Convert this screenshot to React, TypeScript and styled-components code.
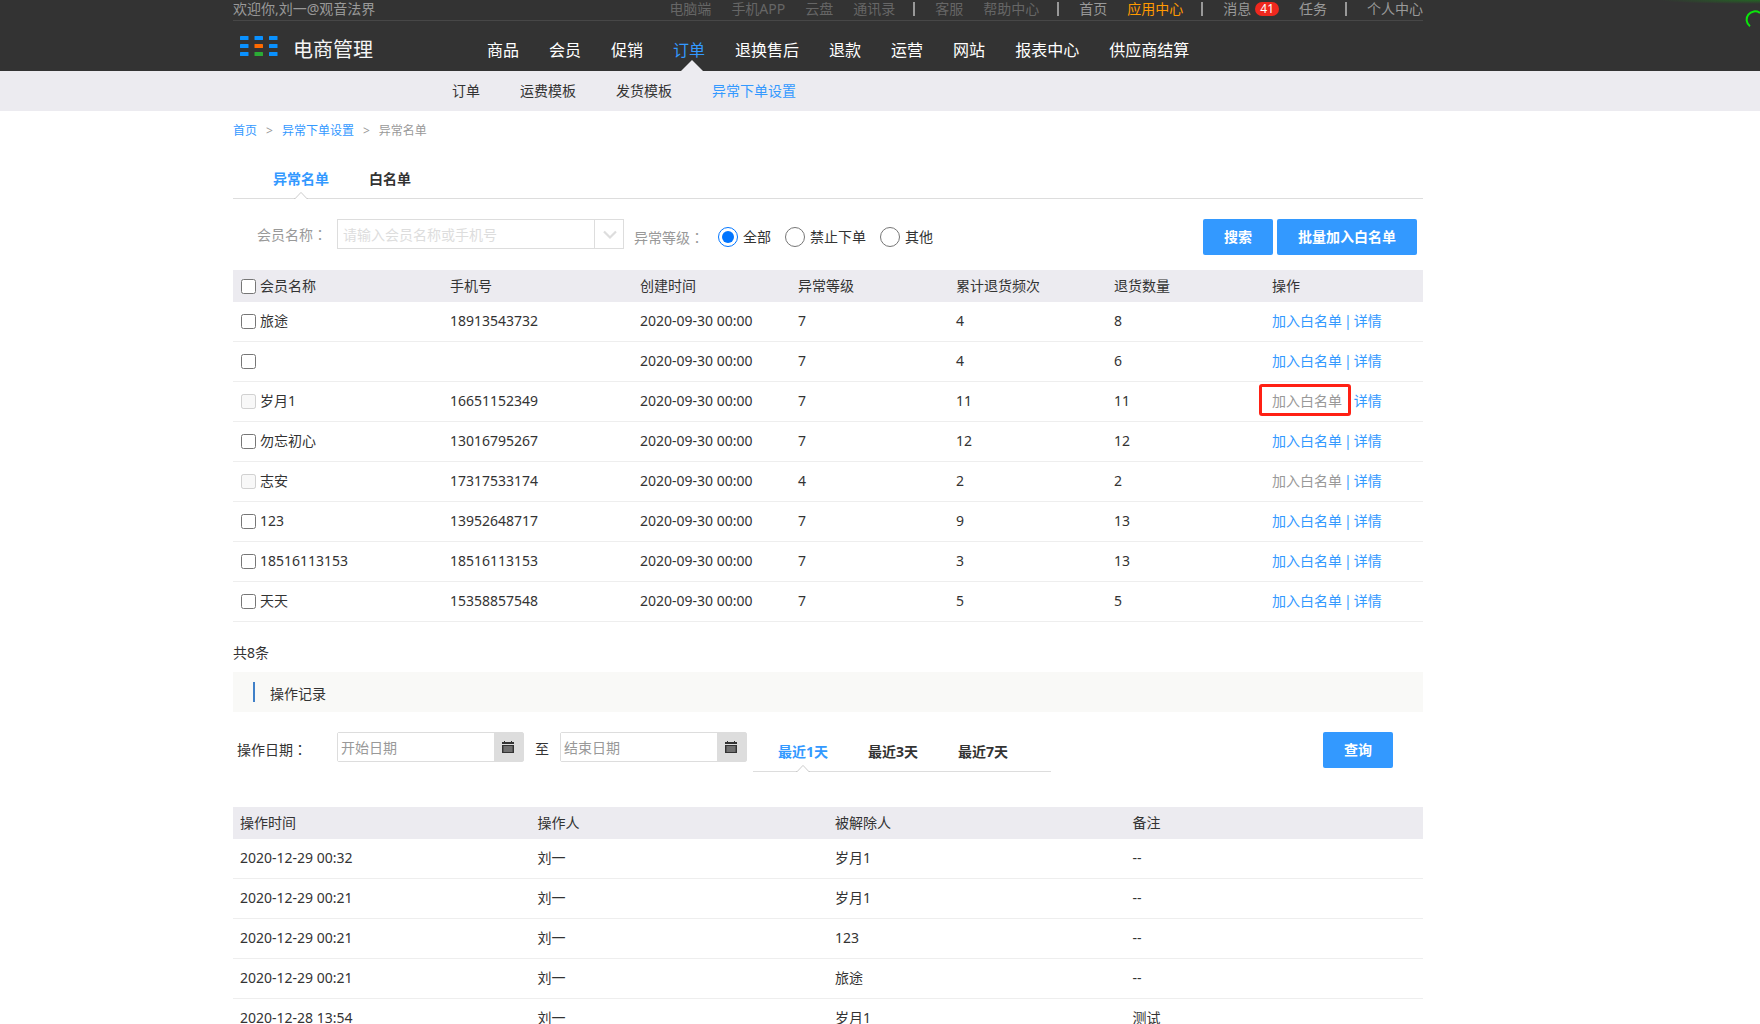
import React, { useState } from "react";
import styled, { createGlobalStyle, css } from "styled-components";

const GlobalStyle = createGlobalStyle`
  *, *::before, *::after { box-sizing: border-box; }
  body {
    margin: 0;
    background: #fff;
    color: #333;
    font: 14px/20px "Noto Sans", "Noto Sans CJK SC", sans-serif;
  }
  a { color: inherit; text-decoration: none; }
  button, input { font: inherit; }
`;

const Page = styled.div`
  min-height: 100vh;
  overflow-x: hidden;
`;

const Band = styled.div`
  padding-right: 104px;
`;
const Column = styled.div`
  max-width: 1190px;
  margin: 0 auto;
`;

/* ---------- header ---------- */
const Header = styled.header`
  position: relative;
  background: #333;
`;
const TopBar = styled.div`
  display: flex;
  justify-content: space-between;
  height: 21px;
  line-height: 18px;
  color: #999;
  border-bottom: 1px solid #474747;
  white-space: nowrap;
`;
const TopLinks = styled.nav`
  display: flex;
  gap: 20px;
`;
const TopLink = styled.a<{ $tone?: "dim" | "hot" }>`
  display: flex;
  align-items: center;
  gap: 4px;
  height: 18px;
  color: ${(p) => (p.$tone === "dim" ? "#666" : p.$tone === "hot" ? "#ff9900" : "#999")};
`;
const TopDivider = styled.span`
  width: 2px;
  height: 14px;
  margin: 2px 0 0 -2px;
  background: #999;
`;
const Badge = styled.span`
  padding: 0 5px;
  border-radius: 8px;
  background: #f0281e;
  color: #fff;
  font-size: 12px;
  line-height: 14px;
`;
const MainBar = styled.div`
  display: flex;
  height: 50px;
`;
const Brand = styled.a`
  display: flex;
  align-items: center;
  gap: 15px;
  width: 254px;
  padding: 8px 0 0 7px;
  color: #f5f5f5;
  font-size: 20px;
  white-space: nowrap;
  svg { margin-bottom: 8px; }
`;
const MainNav = styled.nav`
  display: flex;
  gap: 30px;
`;
const MainLink = styled.a<{ $active?: boolean }>`
  position: relative;
  height: 50px;
  font-size: 16px;
  line-height: 58px;
  white-space: nowrap;
  color: ${(p) => (p.$active ? "#3399ff" : "#fff")};
  ${(p) =>
    p.$active &&
    css`
      &::after {
        content: "";
        position: absolute;
        bottom: 0;
        left: 8px;
        border: 11px solid transparent;
        border-top: 0;
        border-bottom-color: #ecebf0;
      }
    `}
`;
const Spinner = styled.svg`
  position: absolute;
  top: 0;
  right: 0;
`;
const SubBar = styled.div`
  background: #ecebf0;
`;
const SubNav = styled.nav`
  display: flex;
  gap: 40px;
  height: 40px;
  padding-left: 219px;
  line-height: 40px;
`;
const SubLink = styled.a<{ $active?: boolean }>`
  color: ${(p) => (p.$active ? "#3399ff" : "#333")};
`;

/* ---------- shared content parts ---------- */
const Crumbs = styled.nav`
  display: flex;
  gap: 9px;
  padding: 10px 0;
  font-size: 12px;
  color: #999;
  a { color: #3399ff; }
`;
/* Full-width colon set in the middle of its square */
const Colon = styled.span`
  font-family: "Noto Sans CJK TC", sans-serif;
`;
const Tabs = styled.div<{ $inset: number }>`
  display: flex;
  height: 40px;
  padding-left: ${(p) => p.$inset}px;
  border-bottom: 1px solid #ddd;
`;
const Tab = styled.button<{ $active?: boolean }>`
  position: relative;
  height: 40px;
  padding: 0 20px;
  border: 0;
  background: none;
  font-weight: 700;
  white-space: nowrap;
  color: ${(p) => (p.$active ? "#3399ff" : "#333")};
`;
const Notch = styled.svg`
  position: absolute;
  bottom: 0;
  left: calc(50% - 7px);
`;
const Primary = styled.button`
  height: 36px;
  padding: 0 21px;
  border: 0;
  border-radius: 2px;
  background: #3399ff;
  color: #fff;
  font-weight: 700;
`;
const PageTabs = styled.div`
  padding-top: 8px;
`;

/* ---------- search ---------- */
const SearchRow = styled.form`
  display: flex;
  align-items: flex-start;
  padding: 20px 6px 15px 24px;
  white-space: nowrap;
`;
const NameLabel = styled.label`
  width: 80px;
  line-height: 30px;
  color: #999;
`;
const Combo = styled.div`
  display: flex;
  width: 287px;
  height: 30px;
  border: 1px solid #ddd;
`;
const ComboInput = styled.input`
  flex: 1;
  min-width: 0;
  padding: 2px 5px 0;
  border: 0;
  &::placeholder { color: #ddd; opacity: 1; }
`;
const ComboButton = styled.button`
  display: grid;
  place-items: center;
  width: 29px;
  padding: 2px 0 0 1px;
  border: 0;
  border-left: 1px solid #ddd;
  background: none;
`;
const Levels = styled.fieldset`
  display: flex;
  flex: 1;
  align-items: center;
  gap: 14px;
  height: 36px;
  margin: 0;
  padding: 0 0 0 10px;
  border: 0;
`;
const LevelTitle = styled.span`
  color: #999;
`;
const Radio = styled.label`
  display: flex;
  align-items: center;
  gap: 5px;
  input { width: 20px; height: 20px; margin: 0; }
`;
const Actions = styled.div`
  display: flex;
  gap: 4px;
`;

/* ---------- tables ---------- */
const Check = styled.label`
  display: flex;
  align-items: center;
  gap: 4px;
  min-height: 20px;
  input { width: 15px; height: 15px; margin: 0 0 0 1px; }
`;
const Table = styled.table`
  width: 100%;
  table-layout: fixed;
  border-collapse: separate;
  border-spacing: 0;
  th, td {
    padding: 0 7px;
    text-align: left;
    font-weight: 400;
    white-space: nowrap;
  }
  th { height: 32px; background: #ecebf0; }
  td { height: 40px; padding-bottom: 2px; border-bottom: 1px solid #eee; }
  td ${Check} input { margin-top: 2px; }
`;
const Col = styled.col<{ $w?: number }>`
  ${(p) => p.$w && `width: ${p.$w}px;`}
`;
const Ops = styled.div`
  position: relative;
  display: flex;
  gap: 2px;
  color: #3399ff;
`;
const OpLink = styled.a<{ $off?: boolean }>`
  color: ${(p) => (p.$off ? "#999" : "#3399ff")};
`;
const Marker = styled.span`
  position: absolute;
  top: -7px;
  left: -13px;
  width: 92px;
  height: 32px;
  border: 3px solid #ff2014;
  border-radius: 3px;
`;
const MarkedBar = styled.span<{ $hidden?: boolean }>`
  visibility: ${(p) => (p.$hidden ? "hidden" : "visible")};
`;
const Total = styled.p`
  margin: 0;
  padding: 21px 0 9px;
`;

/* ---------- operation log ---------- */
const SectionTitle = styled.h2`
  display: flex;
  gap: 15px;
  height: 40px;
  margin: 0;
  padding: 10px 0 0 20px;
  background: #f9f9f7;
  font-size: 14px;
  font-weight: 400;
  line-height: 24px;
  &::before {
    content: "";
    width: 2px;
    height: 20px;
    background: #4080c8;
  }
`;
const LogRow = styled.form`
  display: flex;
  align-items: flex-start;
  padding: 20px 30px 35px 4px;
  line-height: 34px;
  white-space: nowrap;
`;
const LogLabel = styled.label`
  width: 100px;
`;
const DateBox = styled.div`
  display: flex;
  width: 187px;
  height: 30px;
  border: 1px solid #ddd;
  border-radius: 2px;
`;
const DateInput = styled.input`
  flex: 1;
  min-width: 0;
  padding: 2px 3px 0;
  border: 0;
  &::placeholder { color: #999; opacity: 1; }
`;
const DateButton = styled.button`
  display: grid;
  place-items: center;
  width: 29px;
  padding: 0 2px 0 0;
  border: 0;
  background: #ddd;
`;
const Until = styled.span`
  width: 36px;
  text-align: center;
`;
const RangeTabs = styled.div`
  width: 298px;
  margin: 0 auto 0 6px;
`;

const navGroups: { text: string; tone?: "dim" | "hot"; badge?: number }[][] = [
  [
    { text: "电脑端", tone: "dim" },
    { text: "手机APP", tone: "dim" },
    { text: "云盘", tone: "dim" },
    { text: "通讯录", tone: "dim" },
  ],
  [
    { text: "客服", tone: "dim" },
    { text: "帮助中心", tone: "dim" },
  ],
  [{ text: "首页" }, { text: "应用中心", tone: "hot" }],
  [{ text: "消息", badge: 41 }, { text: "任务" }],
  [{ text: "个人中心" }],
];
const mainNav = ["商品", "会员", "促销", "订单", "退换售后", "退款", "运营", "网站", "报表中心", "供应商结算"];
const subNav = ["订单", "运费模板", "发货模板", "异常下单设置"];
const levels = ["全部", "禁止下单", "其他"];
const ranges = ["最近1天", "最近3天", "最近7天"];

type Member = { name: string; phone: string; level: number; times: number; qty: number; off?: boolean; marked?: boolean };
const members: Member[] = [
  { name: "旅途", phone: "18913543732", level: 7, times: 4, qty: 8 },
  { name: "", phone: "", level: 7, times: 4, qty: 6 },
  { name: "岁月1", phone: "16651152349", level: 7, times: 11, qty: 11, off: true, marked: true },
  { name: "勿忘初心", phone: "13016795267", level: 7, times: 12, qty: 12 },
  { name: "志安", phone: "17317533174", level: 4, times: 2, qty: 2, off: true },
  { name: "123", phone: "13952648717", level: 7, times: 9, qty: 13 },
  { name: "18516113153", phone: "18516113153", level: 7, times: 3, qty: 13 },
  { name: "天天", phone: "15358857548", level: 7, times: 5, qty: 5 },
];
const logs = [
  ["2020-12-29 00:32", "刘一", "岁月1", "--"],
  ["2020-12-29 00:21", "刘一", "岁月1", "--"],
  ["2020-12-29 00:21", "刘一", "123", "--"],
  ["2020-12-29 00:21", "刘一", "旅途", "--"],
  ["2020-12-28 13:54", "刘一", "岁月1", "测试"],
];

function Logo() {
  const fill = (x: number, y: number) => (x !== 1 || y === 0 ? "#0a91ff" : y === 1 ? "#ff6a00" : "#2bab35");
  return (
    <svg width="38" height="20" viewBox="0 0 38 20" aria-hidden="true">
      {[0, 1, 2].map((y) =>
        [0, 1, 2].map((x) => (
          <rect key={`${x}${y}`} x={[0, 14.5, 29][x]} y={y * 8} width="8.5" height="4" rx="0.6" fill={fill(x, y)} />
        ))
      )}
    </svg>
  );
}

function TabNotch() {
  return (
    <Notch width="14" height="8" viewBox="0 0 14 8" aria-hidden="true">
      <path d="M1 8h12L7 1.5z" fill="#fff" />
      <path d="M0 7.5h1.2L7 1.4l5.8 6.1H14" fill="none" stroke="#ccc" />
    </Notch>
  );
}

function Calendar() {
  return (
    <svg width="12" height="12" viewBox="0 0 12 12" aria-hidden="true">
      <path d="M0 1h2V0h1v1h6V0h1v1h2v2H0zM0 4h12v8H0z" fill="#333" />
      <path d="M1 6h10M1 8h10M1 10h10M3 5v6M5 5v6M7 5v6M9 5v6" stroke="#ddd" strokeWidth="0.4" />
    </svg>
  );
}

function TabBar({ items, inset }: { items: string[]; inset: number }) {
  const [current, setCurrent] = useState(0);
  return (
    <Tabs $inset={inset} role="tablist">
      {items.map((t, i) => (
        <Tab key={t} type="button" role="tab" aria-selected={i === current} $active={i === current} onClick={() => setCurrent(i)}>
          {t}
          {i === current && <TabNotch />}
        </Tab>
      ))}
    </Tabs>
  );
}

function DateField({ id, hint }: { id: string; hint: string }) {
  return (
    <DateBox>
      <DateInput id={id} type="text" placeholder={hint} aria-label={hint} />
      <DateButton type="button" aria-label={hint}>
        <Calendar />
      </DateButton>
    </DateBox>
  );
}

export default function App() {
  const [level, setLevel] = useState(levels[0]);
  return (
    <Page>
      <GlobalStyle />
      <Header>
        <Band>
          <Column>
            <TopBar>
              <span>欢迎你,刘一@观音法界</span>
              <TopLinks>
                {navGroups.map((group, g) => (
                  <React.Fragment key={g}>
                    {g > 0 && <TopDivider />}
                    {group.map((l) => (
                      <TopLink key={l.text} href="#" $tone={l.tone}>
                        {l.text}
                        {l.badge && <Badge>{l.badge}</Badge>}
                      </TopLink>
                    ))}
                  </React.Fragment>
                ))}
              </TopLinks>
            </TopBar>
            <MainBar>
              <Brand href="#">
                <Logo />
                电商管理
              </Brand>
              <MainNav>
                {mainNav.map((t) => (
                  <MainLink key={t} href="#" $active={t === "订单"}>
                    {t}
                  </MainLink>
                ))}
              </MainNav>
            </MainBar>
          </Column>
        </Band>
        <Spinner width="100" height="32" viewBox="0 0 100 32" aria-hidden="true">
          <defs>
            <radialGradient id="glow" cx="1" cy="0" r="1">
              <stop offset="0" stopColor="#1d7a1d" stopOpacity="0.7" />
              <stop offset="1" stopColor="#1d7a1d" stopOpacity="0" />
            </radialGradient>
          </defs>
          <rect width="100" height="4" fill="url(#glow)" />
          <path d="M90 26.3A8 8 0 0 1 100 13" fill="none" stroke="#0be60b" strokeWidth="2" />
        </Spinner>
      </Header>
      <SubBar>
        <Band>
          <Column>
            <SubNav>
              {subNav.map((t) => (
                <SubLink key={t} href="#" $active={t === "异常下单设置"}>
                  {t}
                </SubLink>
              ))}
            </SubNav>
          </Column>
        </Band>
      </SubBar>
      <Band>
        <Column as="main">
          <Crumbs>
            <a href="#">首页</a>
            <span>&gt;</span>
            <a href="#">异常下单设置</a>
            <span>&gt;</span>
            <span>异常名单</span>
          </Crumbs>
          <PageTabs>
            <TabBar items={["异常名单", "白名单"]} inset={20} />
          </PageTabs>
          <SearchRow onSubmit={(e) => e.preventDefault()}>
            <NameLabel htmlFor="member">
              会员名称<Colon>：</Colon>
            </NameLabel>
            <Combo>
              <ComboInput id="member" type="text" placeholder="请输入会员名称或手机号" />
              <ComboButton type="button" aria-label="会员名称">
                <svg width="16" height="10" viewBox="0 0 16 10" aria-hidden="true">
                  <path d="M2 1.5l6 6 6-6" fill="none" stroke="#ddd" strokeWidth="2.2" />
                </svg>
              </ComboButton>
            </Combo>
            <Levels>
              <LevelTitle>
                异常等级<Colon>：</Colon>
              </LevelTitle>
              {levels.map((l) => (
                <Radio key={l}>
                  <input type="radio" name="level" checked={level === l} onChange={() => setLevel(l)} />
                  {l}
                </Radio>
              ))}
            </Levels>
            <Actions>
              <Primary type="submit">搜索</Primary>
              <Primary type="button">批量加入白名单</Primary>
            </Actions>
          </SearchRow>
          <Table>
            <colgroup>
              <Col $w={210} />
              <Col $w={190} />
              <Col /><Col /><Col /><Col /><Col />
            </colgroup>
            <thead>
              <tr>
                <th>
                  <Check>
                    <input type="checkbox" />
                    会员名称
                  </Check>
                </th>
                {["手机号", "创建时间", "异常等级", "累计退货频次", "退货数量", "操作"].map((h) => (
                  <th key={h}>{h}</th>
                ))}
              </tr>
            </thead>
            <tbody>
              {members.map((m, i) => (
                <tr key={i}>
                  <td>
                    <Check>
                      <input type="checkbox" disabled={m.off} />
                      {m.name}
                    </Check>
                  </td>
                  <td>{m.phone}</td>
                  <td>2020-09-30 00:00</td>
                  <td>{m.level}</td>
                  <td>{m.times}</td>
                  <td>{m.qty}</td>
                  <td>
                    <Ops>
                      <OpLink href="#" $off={m.off}>加入白名单</OpLink>
                      <MarkedBar $hidden={m.marked}>|</MarkedBar>
                      <OpLink href="#">详情</OpLink>
                      {m.marked && <Marker />}
                    </Ops>
                  </td>
                </tr>
              ))}
            </tbody>
          </Table>
          <Total>共8条</Total>
          <SectionTitle>操作记录</SectionTitle>
          <LogRow onSubmit={(e) => e.preventDefault()}>
            <LogLabel htmlFor="from">
              操作日期<Colon>：</Colon>
            </LogLabel>
            <DateField id="from" hint="开始日期" />
            <Until>至</Until>
            <DateField id="to" hint="结束日期" />
            <RangeTabs>
              <TabBar items={ranges} inset={5} />
            </RangeTabs>
            <Primary type="submit">查询</Primary>
          </LogRow>
          <Table>
            <thead>
              <tr>
                {["操作时间", "操作人", "被解除人", "备注"].map((h) => (
                  <th key={h}>{h}</th>
                ))}
              </tr>
            </thead>
            <tbody>
              {logs.map((row, i) => (
                <tr key={i}>
                  {row.map((c, j) => (
                    <td key={j}>{c}</td>
                  ))}
                </tr>
              ))}
            </tbody>
          </Table>
        </Column>
      </Band>
    </Page>
  );
}
